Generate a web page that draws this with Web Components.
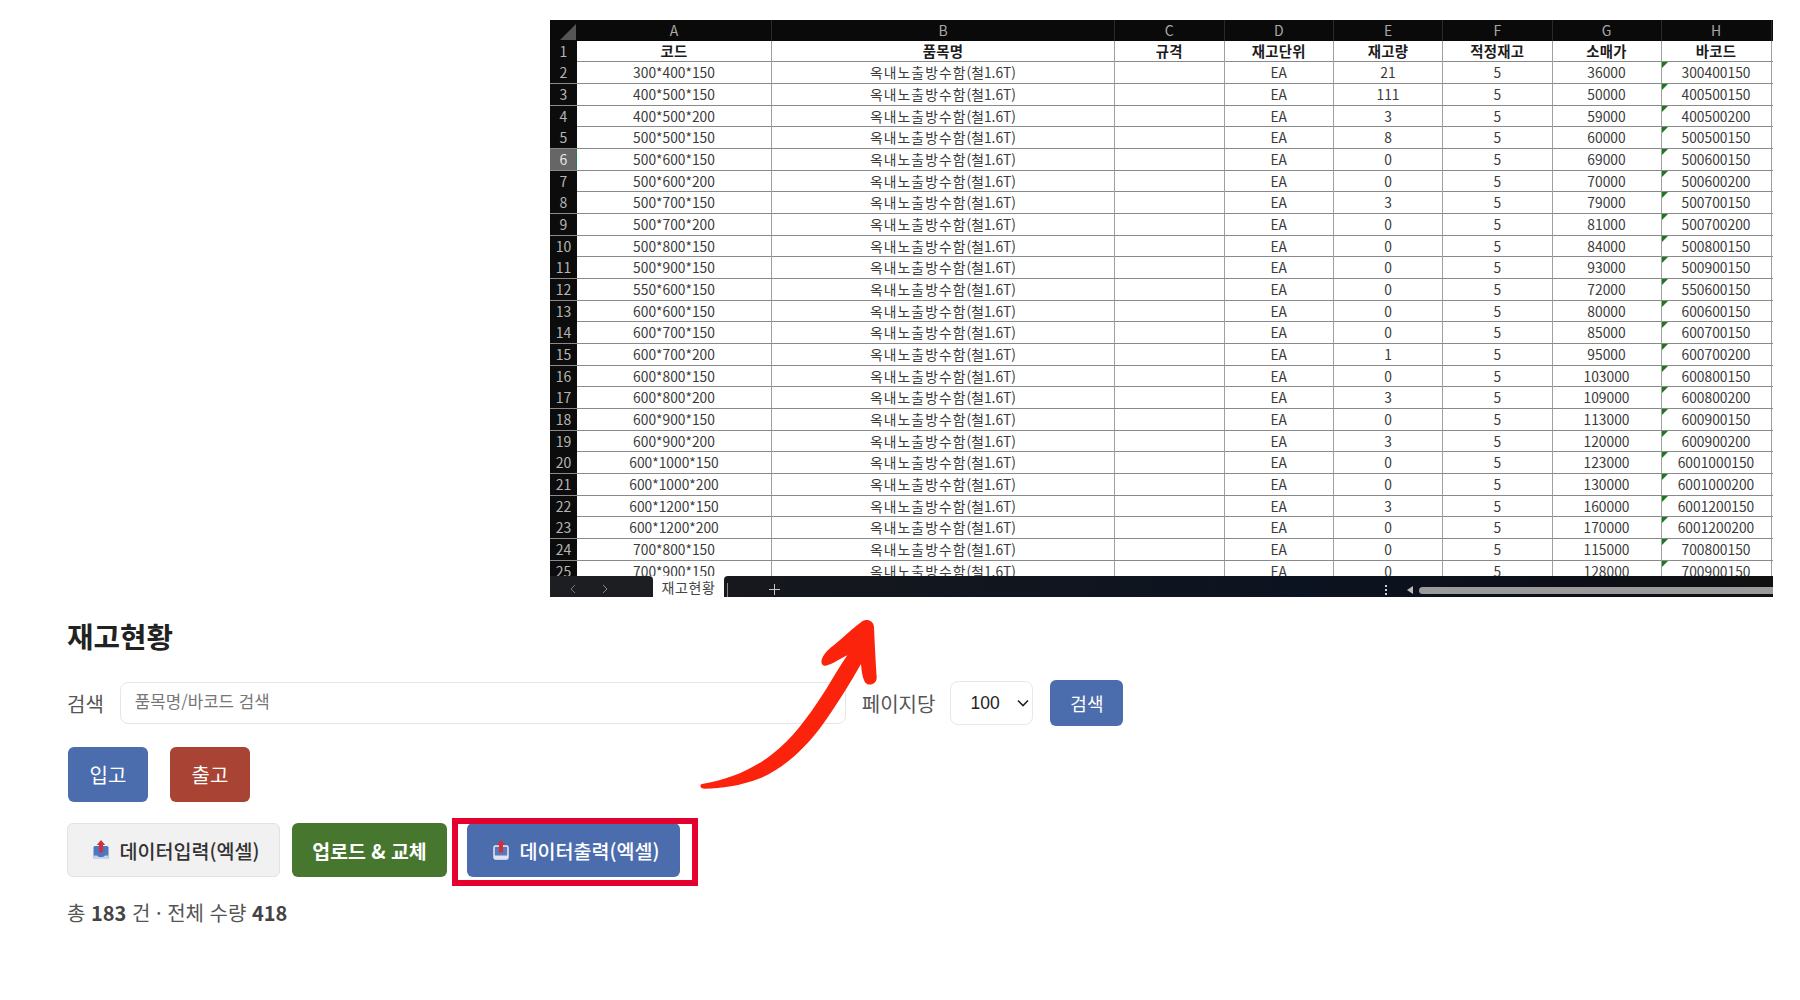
<!DOCTYPE html>
<html lang="ko">
<head>
<meta charset="utf-8">
<title>재고현황</title>
<style>
  html, body { margin: 0; padding: 0; background: #fff; }
  body { width: 1800px; height: 1000px; overflow: hidden; font-family: "Noto Sans CJK KR", "Noto Sans", sans-serif; position: relative; }
</style>
</head>
<body>
<stock-sheet></stock-sheet>
<stock-page>
  <span slot="title">재고현황</span>
</stock-page>
<red-arrow></red-arrow>

<script>
(function () {
  var FONT = '"Noto Sans CJK KR", "Noto Sans", sans-serif';

  var DATA = [
    ["300*400*150", "21", "36000", "300400150"],
    ["400*500*150", "111", "50000", "400500150"],
    ["400*500*200", "3", "59000", "400500200"],
    ["500*500*150", "8", "60000", "500500150"],
    ["500*600*150", "0", "69000", "500600150"],
    ["500*600*200", "0", "70000", "500600200"],
    ["500*700*150", "3", "79000", "500700150"],
    ["500*700*200", "0", "81000", "500700200"],
    ["500*800*150", "0", "84000", "500800150"],
    ["500*900*150", "0", "93000", "500900150"],
    ["550*600*150", "0", "72000", "550600150"],
    ["600*600*150", "0", "80000", "600600150"],
    ["600*700*150", "0", "85000", "600700150"],
    ["600*700*200", "1", "95000", "600700200"],
    ["600*800*150", "0", "103000", "600800150"],
    ["600*800*200", "3", "109000", "600800200"],
    ["600*900*150", "0", "113000", "600900150"],
    ["600*900*200", "3", "120000", "600900200"],
    ["600*1000*150", "0", "123000", "6001000150"],
    ["600*1000*200", "0", "130000", "6001000200"],
    ["600*1200*150", "3", "160000", "6001200150"],
    ["600*1200*200", "0", "170000", "6001200200"],
    ["700*800*150", "0", "115000", "700800150"],
    ["700*900*150", "0", "128000", "700900150"]
  ];

  class StockSheet extends HTMLElement {
    constructor() {
      super();
      this.attachShadow({ mode: "open" });
    }

    connectedCallback() {
      this.render();
    }

    _cell(text, cls) {
      return "<div class='c " + (cls || "") + "'>" + text + "</div>";
    }

    render() {
      var letters = ["A", "B", "C", "D", "E", "F", "G", "H"];
      var heads = ["코드", "품목명", "규격", "재고단위", "재고량", "적정재고", "소매가", "바코드"];
      var html = "<div class='row top'><div class='rh corner'></div>";
      for (var i = 0; i < letters.length; i++) {
        html += "<div class='ch'>" + letters[i] + "</div>";
      }
      html += "</div><div class='row'><div class='rh'>1</div>";
      for (var j = 0; j < heads.length; j++) {
        html += this._cell(heads[j], "b");
      }
      html += "</div>";
      for (var r = 0; r < DATA.length; r++) {
        var d = DATA[r];
        var num = r + 2;
        html += "<div class='row'><div class='rh" + (num === 6 ? " sel" : "") + "'>" + num + "</div>" +
          this._cell(d[0]) +
          this._cell("<span class='ko'>옥내노출방수함</span>(철1.6T)") +
          this._cell("") +
          this._cell("EA") +
          this._cell(d[1]) +
          this._cell("5") +
          this._cell(d[2]) +
          this._cell(d[3], "flag") +
          "</div>";
      }

      this.shadowRoot.innerHTML =
        "<style>" +
        ":host{display:block;width:1223px;height:577px;margin:20px 0 0 550px;font-family:" + FONT + ";position:relative;overflow:hidden;background:#fff;}" +
        ".grid{height:556px;overflow:hidden;}" +
        ".row{display:grid;grid-template-columns:27px 195px 343px 109.5px 109.5px 109px 109.5px 109px 110px;height:21.68px;box-sizing:border-box;border-bottom:1px solid #8a8a8a;}" +
        ".row.top{height:20.6px;background:#0a0a0a;border-bottom:none;}" +
        ".c{font-size:13.8px;line-height:21px;color:#3a3a3a;text-align:center;border-right:1px solid #a0a0a0;position:relative;white-space:nowrap;overflow:hidden;}" +
        ".c.b{font-weight:700;color:#1c1c1c;font-size:14.4px;letter-spacing:.3px;line-height:20px;}" +
        ".ko{letter-spacing:1.1px;}" +
        ".c.flag::before{content:'';position:absolute;left:0;top:0;border-top:6px solid #1c7a1c;border-right:6px solid transparent;}" +
        ".rh{background:#0c0c0c;color:#b5b5b5;font-size:14px;line-height:21px;text-align:center;}" +
        ".rh.sel{background:#666;color:#e8e8e8;box-shadow:inset -1px 0 #2f7d4f;}" +
        ".corner{position:relative;background:#0a0a0a;}" +
        ".corner::after{content:'';position:absolute;right:1px;bottom:1px;border-bottom:16px solid #555;border-left:16px solid transparent;}" +
        ".ch{color:#a8a8a8;font-size:14px;line-height:20px;text-align:center;border-right:1px solid #2a2a2a;}" +
        "</style>" +
        "<div class='grid'>" + html + "</div>" +
        "<sheet-tabs></sheet-tabs>";
    }
  }

  class SheetTabs extends HTMLElement {
    constructor() {
      super();
      this.attachShadow({ mode: "open" });
      this.shadowRoot.innerHTML =
        "<style>" +
        ":host{display:flex;height:21px;width:100%;font-family:" + FONT + ";position:absolute;left:0;bottom:0;background:#fff;}" +
        ".nav{width:103px;background:#1c1e22;border-top-right-radius:4px;display:flex;align-items:center;padding:5px 0 0 19px;gap:24px;box-sizing:border-box;}" +
        ".nav svg{display:block;}" +
        ".tab{width:71px;text-align:center;font-size:14px;line-height:23px;height:21px;overflow:visible;color:#444;letter-spacing:.6px;background:#fff;}" +
        ".rest{flex:1;background:linear-gradient(90deg,#16181d,#0c1320 55%,#0c0f18 80%,#111 100%);border-top-left-radius:4px;display:flex;align-items:center;position:relative;}" +
        ".sep{width:1px;height:14px;background:#888;margin:6px 0 0 3px;}" +
        ".plus{margin-left:41px;margin-top:5px;display:block;}" +
        ".dots{margin-left:auto;margin-right:0;display:flex;flex-direction:column;gap:2px;margin-top:6px;}" +
        ".dots i{display:block;width:2px;height:2px;background:#ccc;}" +
        ".tri{width:0;height:0;border-right:6px solid #bbb;border-top:4px solid transparent;border-bottom:4px solid transparent;margin:7px 0 0 20px;}" +
        ".thumb{width:354px;height:7px;background:#9a9a9a;border-radius:4px 0 0 4px;margin:7px 0 0 6px;}" +
        "</style>" +
        "<div class='nav'>" +
        "<svg width='8' height='10' viewBox='0 0 8 10'><path d='M6 1 2 5l4 4' fill='none' stroke='#777' stroke-width='1'/></svg>" +
        "<svg width='8' height='10' viewBox='0 0 8 10'><path d='M2 1l4 4-4 4' fill='none' stroke='#888' stroke-width='1'/></svg>" +
        "</div>" +
        "<div class='tab'>재고현황</div>" +
        "<div class='rest'><div class='sep'></div>" +
        "<svg class='plus' width='11' height='11' viewBox='0 0 11 11'><path d='M5.5 0v11M0 5.5h11' stroke='#c8c8c8' stroke-width='1'/></svg>" +
        "<div class='dots'><i></i><i></i><i></i></div>" +
        "<div class='tri'></div><div class='thumb'></div></div>";
    }
  }

  class UiButton extends HTMLElement {
    constructor() {
      super();
      var t = this.attachShadow({ mode: "open" });
      t.innerHTML =
        "<style>" +
        ":host{display:inline-flex;align-items:center;justify-content:center;box-sizing:border-box;border-radius:6px;font-family:" + FONT + ";font-size:18px;color:#fff;background:#4c6dad;gap:10px;white-space:nowrap;}" +
        ":host([tone=red]){background:#a94434;}" +
        ":host([tone=green]){background:#47772f;font-weight:700;}" +
        ":host([tone=light]){background:#f1f1f1;color:#333;border:1px solid #e2e2e2;font-weight:500;}" +
        ":host([tone=blue-strong]){font-weight:500;}" +
        "</style><slot></slot>";
    }
  }

  class StockPage extends HTMLElement {
    constructor() {
      super();
      this.attachShadow({ mode: "open" });
      this.shadowRoot.innerHTML =
        "<style>" +
        ":host{display:block;padding-left:67px;font-family:" + FONT + ";color:#555;}" +
        "h2{margin:19px 0 0;font-size:28.8px;line-height:40px;font-weight:700;color:#222;}" +
        ".search{display:flex;align-items:center;margin-top:24px;height:46px;}" +
        ".lbl{font-size:20px;color:#555;}" +
        ".input{box-sizing:border-box;width:726px;height:42px;margin-left:16px;border:1px solid #e6e6e6;border-radius:8px;padding-left:14px;font-size:16.8px;line-height:36px;color:#777;}" +
        ".pp{margin-left:16px;}" +
        ".select{box-sizing:border-box;width:83px;height:44px;margin-left:15px;border:1px solid #e8e8e8;border-radius:8px;display:flex;align-items:center;padding-left:19px;font-size:17.5px;font-family:'Liberation Sans',sans-serif;color:#222;position:relative;gap:17px;}" +
        ".btns{display:flex;gap:22px;margin-top:21px;padding-left:1px;}" +
        ".io{width:80px;height:55px;font-size:20px;}" +
        ".go{width:73px;height:46px;margin-left:17px;}" +
        ".tools{display:flex;margin-top:21px;}" +
        ".t1{width:213px;height:54px;font-size:19.6px;padding-left:6px;}" +
        ".t2{width:155px;height:54px;margin-left:12px;font-size:19.4px;}" +
        ".t3{width:213px;height:54px;font-size:19.6px;padding-left:6px;}" +
        "hl-frame{margin-left:20px;}" +
        ".stats{margin-top:23px;font-size:20px;line-height:26px;color:#555;}" +
        ".stats b{color:#444;font-weight:700;}" +
        "</style>" +
        "<h2><slot name='title'></slot></h2>" +
        "<div class='search'>" +
        "<span class='lbl'>검색</span>" +
        "<div class='input'>품목명/바코드 검색</div>" +
        "<span class='lbl pp'>페이지당</span>" +
        "<div class='select'>100<svg width='12' height='8' viewBox='0 0 12 8'><path d='M1 1.5 6 6.5l5-5' fill='none' stroke='#222' stroke-width='1.6'/></svg></div>" +
        "<ui-button class='go'>검색</ui-button>" +
        "</div>" +
        "<div class='btns'>" +
        "<ui-button class='io'>입고</ui-button>" +
        "<ui-button class='io' tone='red'>출고</ui-button>" +
        "</div>" +
        "<div class='tools'>" +
        "<ui-button class='t1' tone='light'><tray-icon></tray-icon>데이터입력(엑셀)</ui-button>" +
        "<ui-button class='t2' tone='green'>업로드 &amp; 교체</ui-button>" +
        "<hl-frame><ui-button class='t3' tone='blue-strong'><tray-icon outline></tray-icon>데이터출력(엑셀)</ui-button></hl-frame>" +
        "</div>" +
        "<div class='stats'>총 <b>183</b> 건 · 전체 수량 <b>418</b></div>";
    }
  }

  class TrayIcon extends HTMLElement {
    constructor() {
      super();
      this.attachShadow({ mode: "open" });
    }

    connectedCallback() {
      var outline = this.hasAttribute("outline");
      var box = outline
        ? "<rect x='1' y='6' width='14' height='13' rx='1.5' fill='#5b78b8' stroke='#eef1f8' stroke-width='1.4'/>" +
          "<path d='M1 15.5h14V19H1z' fill='#dfe4f2'/>"
        : "<rect x='0.5' y='6' width='15' height='13' rx='1.5' fill='#4a78c4'/>" +
          "<path d='M0.5 15.5 4 15.5 6 17h4l2-1.5h3.5V19H.5z' fill='#c9d2e6'/>";
      this.shadowRoot.innerHTML =
        "<style>:host{display:inline-block;width:16px;height:20px;}svg{display:block;}</style>" +
        "<svg width='16' height='20' viewBox='0 0 16 20'>" + box +
        "<path d='M8 0 12.2 5H10v7.5H6V5H3.8z' fill='#d2303a'/></svg>";
    }
  }

  class HlFrame extends HTMLElement {
    constructor() {
      super();
      this.attachShadow({ mode: "open" });
      this.shadowRoot.innerHTML =
        "<style>" +
        ":host{display:inline-flex;position:relative;}" +
        ".f{position:absolute;left:-15px;right:-18px;top:-5px;bottom:-9px;border:6px solid #e4002f;pointer-events:none;}" +
        "</style><slot></slot><div class='f'></div>";
    }
  }

  class RedArrow extends HTMLElement {
    constructor() {
      super();
      this.attachShadow({ mode: "open" });
      this.shadowRoot.innerHTML =
        "<style>:host{display:block;position:absolute;left:690px;top:600px;width:460px;height:200px;pointer-events:none;}svg{display:block;}</style>" +
        "<svg width='460' height='200' viewBox='0 0 1380 600'>" +
        "<path fill='#fb230c' d='M36 552 C120 538 200 505 268 445 C325 395 372 325 412 262 C430 232 450 198 472 166 " +
        "C450 176 430 192 408 197 C392 199 390 182 402 165 C415 146 430 138 450 120 C475 98 495 80 518 63 " +
        "C532 55 550 62 552 80 C554 130 557 185 560 232 C561 252 538 260 526 248 C516 232 515 210 513 192 " +
        "C480 250 440 315 390 385 C340 450 280 505 210 535 C150 558 95 566 42 566 C30 566 28 555 36 552 Z'/></svg>";
    }
  }

  customElements.define("ui-button", UiButton);
  customElements.define("tray-icon", TrayIcon);
  customElements.define("hl-frame", HlFrame);
  customElements.define("sheet-tabs", SheetTabs);
  customElements.define("stock-sheet", StockSheet);
  customElements.define("stock-page", StockPage);
  customElements.define("red-arrow", RedArrow);
})();
</script>
</body>
</html>
